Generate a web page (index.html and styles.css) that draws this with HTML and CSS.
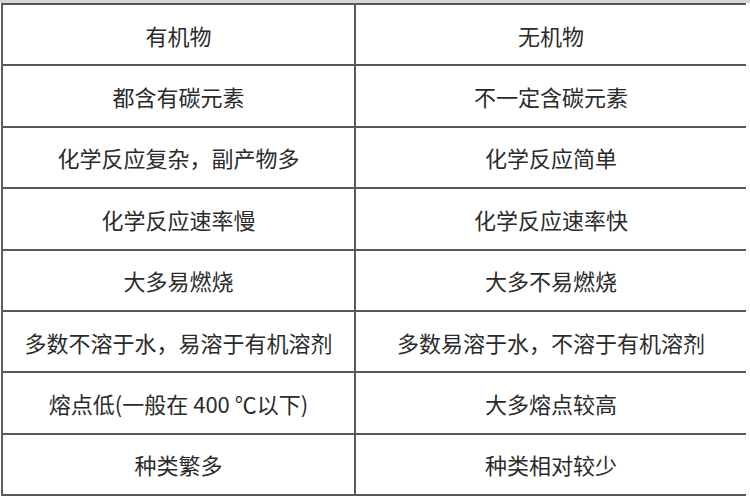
FILE: index.html
```html
<!DOCTYPE html>
<html lang="zh-CN">
<head>
<meta charset="utf-8">
<title>有机物与无机物</title>
<link rel="stylesheet" href="styles.css">
</head>
<body>
<div class="page">
  <div class="grid">
    <div class="cell left">有机物</div>
    <div class="cell right">无机物</div>
    <div class="cell left">都含有碳元素</div>
    <div class="cell right">不一定含碳元素</div>
    <div class="cell left">化学反应复杂，副产物多</div>
    <div class="cell right">化学反应简单</div>
    <div class="cell left">化学反应速率慢</div>
    <div class="cell right">化学反应速率快</div>
    <div class="cell left">大多易燃烧</div>
    <div class="cell right">大多不易燃烧</div>
    <div class="cell left">多数不溶于水，易溶于有机溶剂</div>
    <div class="cell right">多数易溶于水，不溶于有机溶剂</div>
    <div class="cell left">熔点低(一般在 400 ℃以下)</div>
    <div class="cell right">大多熔点较高</div>
    <div class="cell left">种类繁多</div>
    <div class="cell right">种类相对较少</div>
  </div>
</div>
</body>
</html>
```

FILE: styles.css
```css
html, body {
  margin: 0;
  padding: 0;
  background: #ffffff;
}

.page {
  width: 750px;
  height: 500px;
  box-sizing: border-box;
  padding: 3px 4px 0 1px;
  background: linear-gradient(#d6d6d6, #d6d6d6) top left / 100% 3px no-repeat, #ffffff;
}

.grid {
  display: grid;
  grid-template-columns: 353px 390px;
  grid-auto-rows: 61.4px;
  border-top: 2px solid #585858;
  border-left: 2px solid #5e5e5e;
}

.cell {
  display: flex;
  align-items: center;
  justify-content: center;
  border-bottom: 2px solid #585858;
  font-family: "Noto Sans CJK SC", "Liberation Sans", sans-serif;
  font-size: 22px;
  color: #2b2b2b;
  white-space: nowrap;
}

.left {
  border-right: 2px solid #585858;
}
```
